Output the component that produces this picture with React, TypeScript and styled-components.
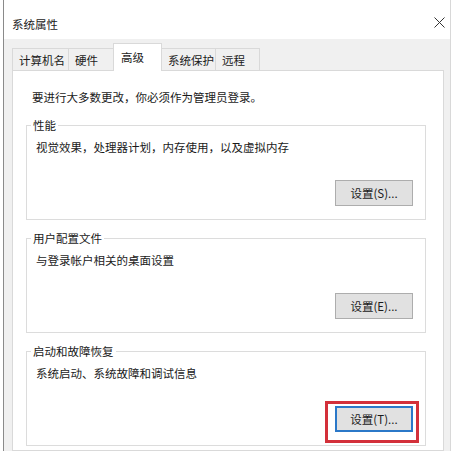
import React from "react";
import styled, { createGlobalStyle } from "styled-components";

const Global = createGlobalStyle`
  html, body { margin: 0; padding: 0; background: #ffffff; }
  body {
    font-family: "Microsoft YaHei", "Noto Sans CJK SC", "Noto Sans", sans-serif;
    color: #1a1a1a;
  }
  * { box-sizing: border-box; }
`;

const Page = styled.div`
  width: 463px;
  height: 451px;
  overflow: hidden;
  padding-left: 3px;
  background: #ffffff;
`;

const Window = styled.div`
  width: 448px;
  height: 451px;
  display: flex;
  flex-direction: column;
  border-left: 1px solid #8a8a8a;
  border-right: 1px solid #d8d8d8;
  background: #f0f0f0;
  overflow: hidden;
`;

const TitleBar = styled.div`
  height: 39px;
  flex: none;
  display: flex;
  align-items: center;
  justify-content: space-between;
  padding: 9px 5px 0 8px;
  background: #ffffff;
`;

const Title = styled.span`
  font-size: 11.5px;
  line-height: 16px;
  color: #1a1a1a;
`;

const Close = styled.button`
  all: unset;
  display: flex;
  width: 11px;
  height: 11px;
  margin-bottom: 3px;
  color: #333333;
`;

const Body = styled.div`
  flex: 1;
  display: flex;
  flex-direction: column;
  padding: 0 6px 0 8px;
  min-height: 0;
`;

const TabRow = styled.div`
  height: 31px;
  flex: none;
  display: flex;
  align-items: flex-end;
  position: relative;
  z-index: 1;
`;

const Tab = styled.div<{ $w: number; $active?: boolean }>`
  width: ${(p) => p.$w}px;
  height: ${(p) => (p.$active ? 28 : 22)}px;
  margin-bottom: ${(p) => (p.$active ? -1 : 0)}px;
  margin-left: -1px;
  &:first-child { margin-left: 0; }
  display: flex;
  align-items: center;
  padding: ${(p) => (p.$active ? "0 0 1px 7px" : "0 0 0 6px")};
  font-size: 11.5px;
  line-height: 16px;
  white-space: nowrap;
  color: #1a1a1a;
  background: ${(p) => (p.$active ? "#ffffff" : "#f0f0f0")};
  border: 1px solid #d9d9d9;
  border-bottom: none;
  position: relative;
  z-index: ${(p) => (p.$active ? 2 : 1)};
`;

const Panel = styled.div`
  flex: 1;
  display: flex;
  flex-direction: column;
  background: #ffffff;
  border: 1px solid #d9d9d9;
  padding: 18px 17px 0 13px;
`;

const Intro = styled.p`
  margin: 0 0 12px 6px;
  font-size: 11.5px;
  line-height: 16px;
`;

const Groups = styled.div`
  display: flex;
  flex-direction: column;
  gap: 10px;
`;

const Group = styled.fieldset`
  margin: 0;
  padding: 0 0 13px 0;
  border: 1px solid #dcdcdc;
  min-width: 0;
`;

const Legend = styled.legend`
  margin-left: 4px;
  padding: 0 2px;
  font-size: 11.5px;
  line-height: 16px;
  color: #1a1a1a;
`;

const Desc = styled.p`
  margin: 6px 0 0 9px;
  font-size: 11.5px;
  line-height: 16px;
`;

const ButtonRow = styled.div`
  display: flex;
  justify-content: flex-end;
  margin-top: 25px;
  padding-right: 12px;
`;

const Highlight = styled.div`
  position: relative;
  display: flex;
  &::after {
    content: "";
    position: absolute;
    top: -5px;
    left: -10px;
    right: -6px;
    bottom: -11px;
    border: 3px solid #d3303a;
    pointer-events: none;
  }
`;

const SettingsButton = styled.button<{ $focused?: boolean }>`
  width: 78px;
  height: 26px;
  margin: 0;
  padding: 0;
  font-family: inherit;
  font-size: 11.5px;
  line-height: 16px;
  color: #1a1a1a;
  background: #e1e1e1;
  border: ${(p) => (p.$focused ? "2px solid #2b78c8" : "1px solid #adadad")};
  border-radius: 0;
`;

const tabs = [
  { label: "计算机名", w: 57 },
  { label: "硬件", w: 46 },
  { label: "高级", w: 49, active: true },
  { label: "系统保护", w: 55 },
  { label: "远程", w: 45 },
];

const groups = [
  { title: "性能", desc: "视觉效果，处理器计划，内存使用，以及虚拟内存", btn: "设置(S)..." },
  { title: "用户配置文件", desc: "与登录帐户相关的桌面设置", btn: "设置(E)..." },
  { title: "启动和故障恢复", desc: "系统启动、系统故障和调试信息", btn: "设置(T)...", focused: true },
];

export default function App() {
  return (
    <>
      <Global />
      <Page>
        <Window>
          <TitleBar>
            <Title>系统属性</Title>
            <Close aria-label="关闭">
              <svg width="11" height="11" viewBox="0 0 11 11">
                <path d="M0.5 0.5 L10.5 10.5 M10.5 0.5 L0.5 10.5" stroke="currentColor" strokeWidth="1" fill="none" />
              </svg>
            </Close>
          </TitleBar>
          <Body>
            <TabRow>
              {tabs.map((t) => (
                <Tab key={t.label} $w={t.w} $active={t.active}>
                  {t.label}
                </Tab>
              ))}
            </TabRow>
            <Panel>
              <Intro>要进行大多数更改，你必须作为管理员登录。</Intro>
              <Groups>
                {groups.map((g) => (
                  <Group key={g.title}>
                    <Legend>{g.title}</Legend>
                    <Desc>{g.desc}</Desc>
                    <ButtonRow>
                      {g.focused ? (
                        <Highlight>
                          <SettingsButton $focused>{g.btn}</SettingsButton>
                        </Highlight>
                      ) : (
                        <SettingsButton>{g.btn}</SettingsButton>
                      )}
                    </ButtonRow>
                  </Group>
                ))}
              </Groups>
            </Panel>
          </Body>
        </Window>
      </Page>
    </>
  );
}
